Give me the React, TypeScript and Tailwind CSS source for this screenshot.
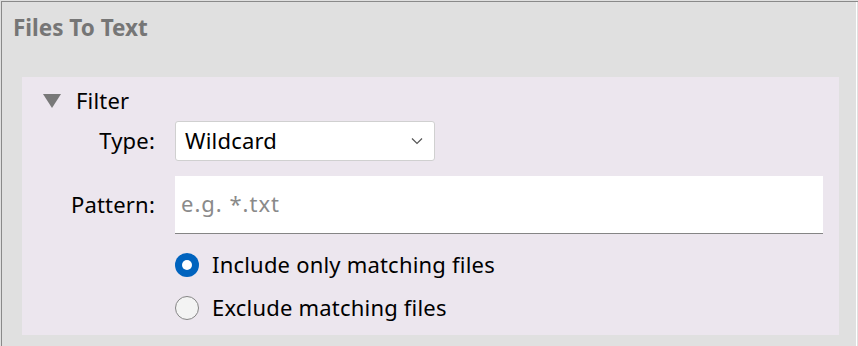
import React from "react";

export default function App() {
  const font = { fontFamily: '"Segoe UI", "Noto Sans", "Open Sans", sans-serif' };
  return (
    <div className="w-[858px] h-[346px] bg-[#e0e0e0] pt-[1px] pl-[1px] overflow-hidden" style={font}>
      <div className="h-[345px] border-t border-l border-[#8a8a8a] flex">
        <div className="flex-1 flex flex-col">
          <div className="h-[54px] flex items-center pl-[11px] pb-[2px]">
            <span className="text-[22.5px] font-bold text-[#767676] leading-none">Files To Text</span>
          </div>
          <div className="ml-[20px] mr-[17px] mt-[21px] h-[258px] bg-[#ece6ee] pl-[20px] pr-[16px] pt-[12px]">
            <div className="flex items-center h-[24px] gap-[14px]">
              <svg width="19" height="16" viewBox="0 0 19 16" className="ml-[1px]">
                <polygon points="0,1 18,1 9,15" fill="#787878" />
              </svg>
              <span className="text-[22px] text-black leading-none tracking-[0.2px] mb-[3px]">Filter</span>
            </div>
            <div className="grid grid-cols-[113px_1fr] gap-x-[20px] mt-[8px]">
              <div className="h-[40px] flex items-center justify-end text-[22px] text-black leading-none tracking-[0.2px] pb-[3px]">Type:</div>
              <div className="h-[40px] w-[260px] bg-white border border-[#d0d0d0] rounded-[3px] flex items-center justify-between pl-[9px] pr-[11px]">
                <span className="text-[22px] text-black leading-none tracking-[0.2px] mb-[3px]">Wildcard</span>
                <svg width="12" height="8" viewBox="0 0 12 8">
                  <polyline points="1,1.5 6,6.5 11,1.5" fill="none" stroke="#555" strokeWidth="1.2" />
                </svg>
              </div>
              <div className="h-[58px] mt-[15px] flex items-center justify-end text-[22px] text-black leading-none tracking-[0.2px] pb-[3px]">Pattern:</div>
              <div className="h-[58px] mt-[15px] bg-white border-b border-[#858585] flex items-center pl-[6px]">
                <span className="text-[22px] text-[#8a8a8a] leading-none tracking-[1px] mb-[3px]">e.g. *.txt</span>
              </div>
              <div />
              <div className="flex flex-col mt-[19px] gap-[19px]">
                <div className="flex items-center gap-[13px] h-[24px]">
                  <span className="w-[24px] h-[24px] rounded-full bg-[#0063be] flex items-center justify-center">
                    <span className="w-[10px] h-[10px] rounded-full bg-white" />
                  </span>
                  <span className="text-[22px] text-black leading-none tracking-[0.2px] mb-[3px]">Include only matching files</span>
                </div>
                <div className="flex items-center gap-[13px] h-[24px]">
                  <span className="w-[24px] h-[24px] rounded-full bg-[#f3f3f3] border border-[#858585]" />
                  <span className="text-[22px] text-black leading-none tracking-[0.2px] mb-[3px]">Exclude matching files</span>
                </div>
              </div>
            </div>
          </div>
        </div>
        <div className="w-[1px] bg-white" />
        <div className="w-[1px] bg-[#e0e0e0]" />
      </div>
    </div>
  );
}
